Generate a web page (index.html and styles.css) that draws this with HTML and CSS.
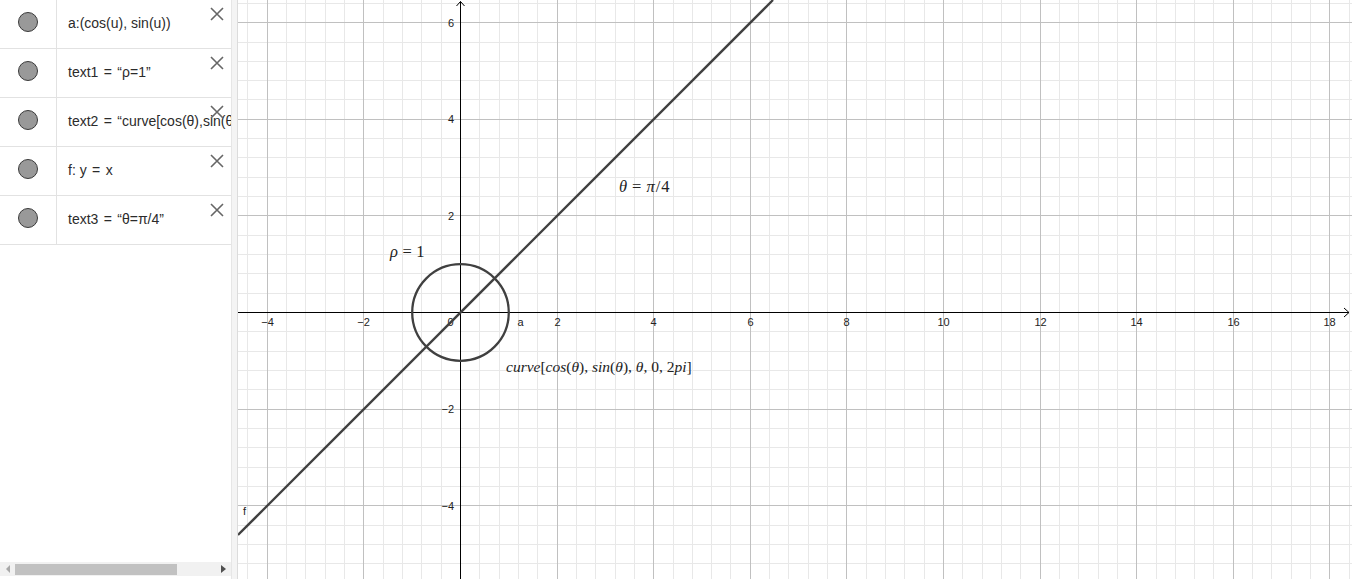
FILE: index.html
```html
<!DOCTYPE html>
<html lang="en">
<head>
<meta charset="utf-8">
<title>Graphing</title>
<link rel="stylesheet" href="styles.css">
</head>
<body>
<div class="app">
  <aside class="algebra">
    <div class="rows">
      <div class="row">
        <div class="marker"><span class="dot"></span></div>
        <div class="expr">a:(cos(u), sin(u))</div>
        <svg class="close" viewBox="0 0 14 14"><path d="M1 1L13 13M13 1L1 13"/></svg>
      </div>
      <div class="row">
        <div class="marker"><span class="dot"></span></div>
        <div class="expr">text1 <span class="eq">=</span> “ρ=1”</div>
        <svg class="close" viewBox="0 0 14 14"><path d="M1 1L13 13M13 1L1 13"/></svg>
      </div>
      <div class="row">
        <div class="marker"><span class="dot"></span></div>
        <div class="expr">text2 <span class="eq">=</span> “curve[cos(θ),sin(θ), θ, 0, 2pi]”</div>
        <svg class="close" viewBox="0 0 14 14"><path d="M1 1L13 13M13 1L1 13"/></svg>
      </div>
      <div class="row">
        <div class="marker"><span class="dot"></span></div>
        <div class="expr">f: y <span class="eq">=</span> x</div>
        <svg class="close" viewBox="0 0 14 14"><path d="M1 1L13 13M13 1L1 13"/></svg>
      </div>
      <div class="row">
        <div class="marker"><span class="dot"></span></div>
        <div class="expr">text3 <span class="eq">=</span> “θ=π/4”</div>
        <svg class="close" viewBox="0 0 14 14"><path d="M1 1L13 13M13 1L1 13"/></svg>
      </div>
    </div>
    <div class="hscroll">
      <span class="arrow-box"><span class="arrow left"></span></span>
      <span class="thumb"></span>
      <span class="spacer"></span>
      <span class="arrow-box"><span class="arrow right"></span></span>
    </div>
  </aside>
  <div class="splitter"></div>
  <main class="graphics">
    <svg class="canvas" viewBox="238 0 1114 579" width="1114" height="579">
      <path class="grid-minor" d="M247.5 0V579M286.5 0V579M305.5 0V579M325.5 0V579M344.5 0V579M383.5 0V579M402.5 0V579M421.5 0V579M441.5 0V579M479.5 0V579M499.5 0V579M518.5 0V579M537.5 0V579M576.5 0V579M595.5 0V579M615.5 0V579M634.5 0V579M673.5 0V579M692.5 0V579M711.5 0V579M730.5 0V579M769.5 0V579M788.5 0V579M808.5 0V579M827.5 0V579M866.5 0V579M885.5 0V579M904.5 0V579M924.5 0V579M962.5 0V579M982.5 0V579M1001.5 0V579M1020.5 0V579M1059.5 0V579M1078.5 0V579M1098.5 0V579M1117.5 0V579M1156.5 0V579M1175.5 0V579M1194.5 0V579M1213.5 0V579M1252.5 0V579M1271.5 0V579M1291.5 0V579M1310.5 0V579M1349.5 0V579M238 3.5H1352M238 42.5H1352M238 61.5H1352M238 80.5H1352M238 99.5H1352M238 138.5H1352M238 157.5H1352M238 177.5H1352M238 196.5H1352M238 235.5H1352M238 254.5H1352M238 273.5H1352M238 293.5H1352M238 331.5H1352M238 351.5H1352M238 370.5H1352M238 389.5H1352M238 428.5H1352M238 447.5H1352M238 467.5H1352M238 486.5H1352M238 525.5H1352M238 544.5H1352M238 563.5H1352"/>
      <path class="grid-major" d="M267.5 0V579M363.5 0V579M557.5 0V579M653.5 0V579M750.5 0V579M846.5 0V579M943.5 0V579M1040.5 0V579M1136.5 0V579M1233.5 0V579M1329.5 0V579M238 22.5H1352M238 119.5H1352M238 215.5H1352M238 409.5H1352M238 505.5H1352"/>
      <path class="axis" d="M238 312.5H1349M1344 308L1349 312.5L1344 317M460.5 579V1.5M456.5 6L460.5 1.5L464.5 6"/>
      <g class="tick tick-x">
        <text x="267.5" y="326">−4</text>
        <text x="363.5" y="326">−2</text>
        <text x="557.5" y="326">2</text>
        <text x="653.5" y="326">4</text>
        <text x="750.5" y="326">6</text>
        <text x="846.5" y="326">8</text>
        <text x="943.5" y="326">10</text>
        <text x="1040.5" y="326">12</text>
        <text x="1136.5" y="326">14</text>
        <text x="1233.5" y="326">16</text>
        <text x="1329.5" y="326">18</text>
      </g>
      <g class="tick tick-y">
        <text x="454" y="27">6</text>
        <text x="454" y="123">4</text>
        <text x="454" y="220">2</text>
        <text x="454" y="413">−2</text>
        <text x="454" y="509.5">−4</text>
        <text x="453.5" y="326">0</text>
      </g>
      <circle class="curve" cx="460.5" cy="312.5" r="48.3"/>
      <path class="curve" d="M238 535L773 0"/>
      <text class="label" x="517.5" y="326">a</text>
      <text class="label" x="243" y="515">f</text>
      <text class="math big" x="390" y="256.5"><tspan class="it">ρ</tspan><tspan dx="4.5">=</tspan><tspan dx="4.5">1</tspan></text>
      <text class="math big" x="619" y="192"><tspan class="it">θ</tspan><tspan dx="5">=</tspan><tspan class="it" dx="5">π</tspan><tspan dx="1">/</tspan><tspan dx="1">4</tspan></text>
      <text class="math curve-text" x="506" y="372"><tspan class="it">curve</tspan>[<tspan class="it">cos</tspan>(<tspan class="it">θ</tspan>), <tspan class="it">sin</tspan>(<tspan class="it">θ</tspan>), <tspan class="it">θ</tspan>, 0, 2<tspan class="it">pi</tspan>]</text>
    </svg>
  </main>
</div>
</body>
</html>
```
FILE: styles.css
```css
* { box-sizing: border-box; }
html, body {
  margin: 0;
  padding: 0;
  width: 1352px;
  height: 579px;
  overflow: hidden;
  background: #fff;
}
.app {
  display: flex;
  width: 1352px;
  height: 579px;
}
.algebra {
  width: 232px;
  height: 579px;
  flex: none;
  display: flex;
  flex-direction: column;
  overflow: hidden;
  border-right: 1px solid #e6e6e6;
  background: #fff;
}
.rows {
  flex: 1;
  display: flex;
  flex-direction: column;
}
.row {
  position: relative;
  display: flex;
  height: 49px;
  border-bottom: 1px solid #e2e2e2;
  flex: none;
}
.marker {
  width: 57px;
  flex: none;
  border-right: 1px solid #e2e2e2;
  padding: 12px 0 0 18px;
}
.dot {
  display: block;
  width: 20px;
  height: 20px;
  border-radius: 50%;
  background: #999;
  border: 1px solid #3a3a3a;
}
.expr {
  padding: 15px 0 0 11px;
  font-family: "Liberation Sans", Arial, sans-serif;
  font-size: 14px;
  line-height: 16px;
  color: #2b2b2b;
  white-space: nowrap;
}
.eq { padding: 0 1.5px; }
.close {
  position: absolute;
  left: 210px;
  top: 7px;
  width: 14px;
  height: 14px;
  fill: none;
  stroke: #666;
  stroke-width: 1.6;
}
.hscroll {
  flex: none;
  height: 14px;
  margin-bottom: 3px;
  background: #f1f1f1;
  display: flex;
  align-items: center;
}
.arrow-box {
  width: 15px;
  height: 14px;
  display: flex;
  align-items: center;
  justify-content: center;
  flex: none;
}
.arrow {
  width: 0;
  height: 0;
  border-top: 4px solid transparent;
  border-bottom: 4px solid transparent;
}
.arrow.left { border-right: 4px solid #a8a8a8; }
.arrow.right { border-left: 5px solid #505050; }
.thumb {
  width: 162px;
  height: 11px;
  background: #c1c1c1;
  flex: none;
}
.spacer { flex: 1; }
.splitter {
  width: 6px;
  flex: none;
  background: #f4f4f4;
  border-right: 1px solid #dcdcdc;
}
.graphics {
  flex: 1;
  height: 579px;
  overflow: hidden;
}
.canvas { display: block; }
.grid-minor { stroke: #e8e8e8; stroke-width: 1; fill: none; }
.grid-major { stroke: #c0c0c0; stroke-width: 1; fill: none; }
.axis { stroke: #000; stroke-width: 1; fill: none; }
.tick {
  font-family: "Liberation Sans", Arial, sans-serif;
  font-size: 11px;
  fill: #222;
}
.tick-x { text-anchor: middle; }
.tick-y { text-anchor: end; }
.curve { fill: none; stroke: #404040; stroke-width: 2.3; }
.label {
  font-family: "Liberation Sans", Arial, sans-serif;
  font-size: 11px;
  fill: #222;
}
.math {
  font-family: "Liberation Serif", "DejaVu Serif", serif;
  font-size: 15px;
  fill: #222;
}
.math.big { font-size: 16.5px; }
.math.curve-text { font-size: 15.5px; }
.it { font-style: italic; }
```
